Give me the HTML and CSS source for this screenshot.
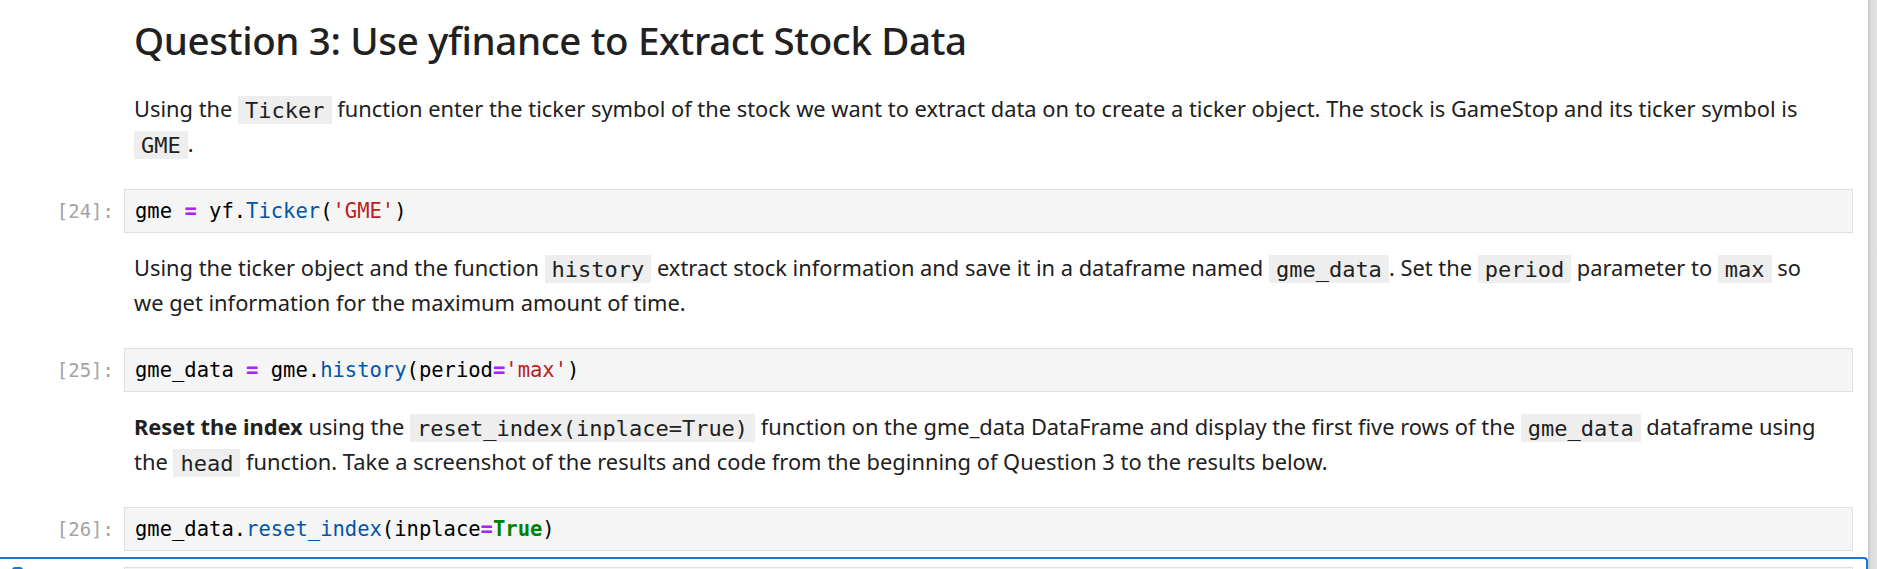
FILE: index.html
```html
<!DOCTYPE html>
<html>
<head>
<meta charset="utf-8">
<link rel="stylesheet" href="styles.css">
</head>
<body>
<div class="app">
  <div class="notebook">
    <div class="cell md first">
      <div class="prompt"></div>
      <div class="content">
        <h2 class="title">Question 3: Use yfinance to Extract Stock Data</h2>
        <p class="text">Using the <code class="ic">Ticker</code> function enter the ticker symbol of the stock we want to extract data on to create a ticker object. The stock is GameStop and its ticker symbol is<br><code class="ic">GME</code>.</p>
      </div>
    </div>
    <div class="cell code">
      <div class="prompt">[24]:</div>
      <div class="content"><div class="input">gme <span class="op">=</span> yf<span class="pu">.</span><span class="pr">Ticker</span>(<span class="st">'GME'</span>)</div></div>
    </div>
    <div class="cell md">
      <div class="prompt"></div>
      <div class="content">
        <p class="text">Using the ticker object and the function <code class="ic">history</code> extract stock information and save it in a dataframe named <code class="ic">gme_data</code>. Set the <code class="ic">period</code> parameter to <code class="ic">max</code> so<br>we get information for the maximum amount of time.</p>
      </div>
    </div>
    <div class="cell code">
      <div class="prompt">[25]:</div>
      <div class="content"><div class="input">gme_data <span class="op">=</span> gme<span class="pu">.</span><span class="pr">history</span>(period<span class="op">=</span><span class="st">'max'</span>)</div></div>
    </div>
    <div class="cell md">
      <div class="prompt"></div>
      <div class="content">
        <p class="text"><strong>Reset the index</strong> using the <code class="ic">reset_index(inplace=True)</code> function on the gme_data DataFrame and display the first five rows of the <code class="ic">gme_data</code> dataframe using<br>the <code class="ic">head</code> function. Take a screenshot of the results and code from the beginning of Question 3 to the results below.</p>
      </div>
    </div>
    <div class="cell code">
      <div class="prompt">[26]:</div>
      <div class="content"><div class="input">gme_data<span class="pu">.</span><span class="pr">reset_index</span>(inplace<span class="op">=</span><span class="kw">True</span>)</div></div>
    </div>
    <div class="cell active">
      <div class="prompt"><div class="collapser"></div></div>
      <div class="content"><div class="input empty"></div></div>
    </div>
  </div>
  <div class="scrollbar"></div>
</div>
</body>
</html>
```
FILE: styles.css
```css
html, body {
  margin: 0;
  padding: 0;
  background: #ffffff;
}
.app {
  display: flex;
  width: 1877px;
  height: 569px;
  overflow: hidden;
}
.notebook {
  flex: 1;
  min-width: 0;
}
.scrollbar {
  width: 9px;
  flex: none;
  background: linear-gradient(to right, #c4c4c4, #dcdcdc 35%, #e2e2e2);
}
.cell {
  display: flex;
}
.prompt {
  width: 124px;
  flex: none;
  box-sizing: border-box;
  padding: 10px 10px 0 0;
  text-align: right;
  font-family: "DejaVu Sans Mono", monospace;
  font-size: 19px;
  line-height: 24px;
  color: #a3a3a3;
  position: relative;
}
.content {
  flex: 1;
  min-width: 0;
  margin-right: 15px;
}
.md .content {
  padding: 17px 10px 28px 10px;
  color: #212121;
  font-family: "Noto Sans", "Open Sans", sans-serif;
}
.md.first .content {
  padding-top: 16px;
}
.title {
  margin: 0 0 27px 0;
  font-size: 38.5px;
  line-height: 48px;
  font-weight: 500;
  letter-spacing: -0.35px;
  color: #212121;
}
.text {
  margin: 0;
  font-size: 21.85px;
  line-height: 35px;
}
.text strong {
  font-weight: 700;
}
.ic {
  font-family: "DejaVu Sans Mono", monospace;
  font-size: 22px;
  line-height: 1;
  background: #eeeeee;
  padding: 1.5px 7px;
  color: #212121;
}
.input {
  border: 1px solid #e0e0e0;
  background: #f5f5f5;
  padding: 9px 10px;
  font-family: "DejaVu Sans Mono", monospace;
  font-size: 20.5px;
  line-height: 24px;
  color: #000000;
  white-space: pre;
}
.op {
  color: #aa22ff;
  font-weight: 700;
}
.pu {
  color: #000000;
}
.pr {
  color: #0055aa;
}
.st {
  color: #ba2121;
}
.kw {
  color: #008000;
  font-weight: 700;
}
.active {
  margin-top: 6px;
  border-top: 2px solid #1976d2;
  border-right: 2px solid #1976d2;
  border-top-right-radius: 4px;
  padding-top: 8px;
  margin-right: 0;
}
.active .content {
  margin-right: 13px;
}
.active .prompt {
  padding: 0;
}
.collapser {
  position: absolute;
  left: 12px;
  top: 0;
  width: 11px;
  height: 40px;
  background: #1976d2;
  border-radius: 3px 3px 0 0;
}
.input.empty {
  height: 24px;
}
```
